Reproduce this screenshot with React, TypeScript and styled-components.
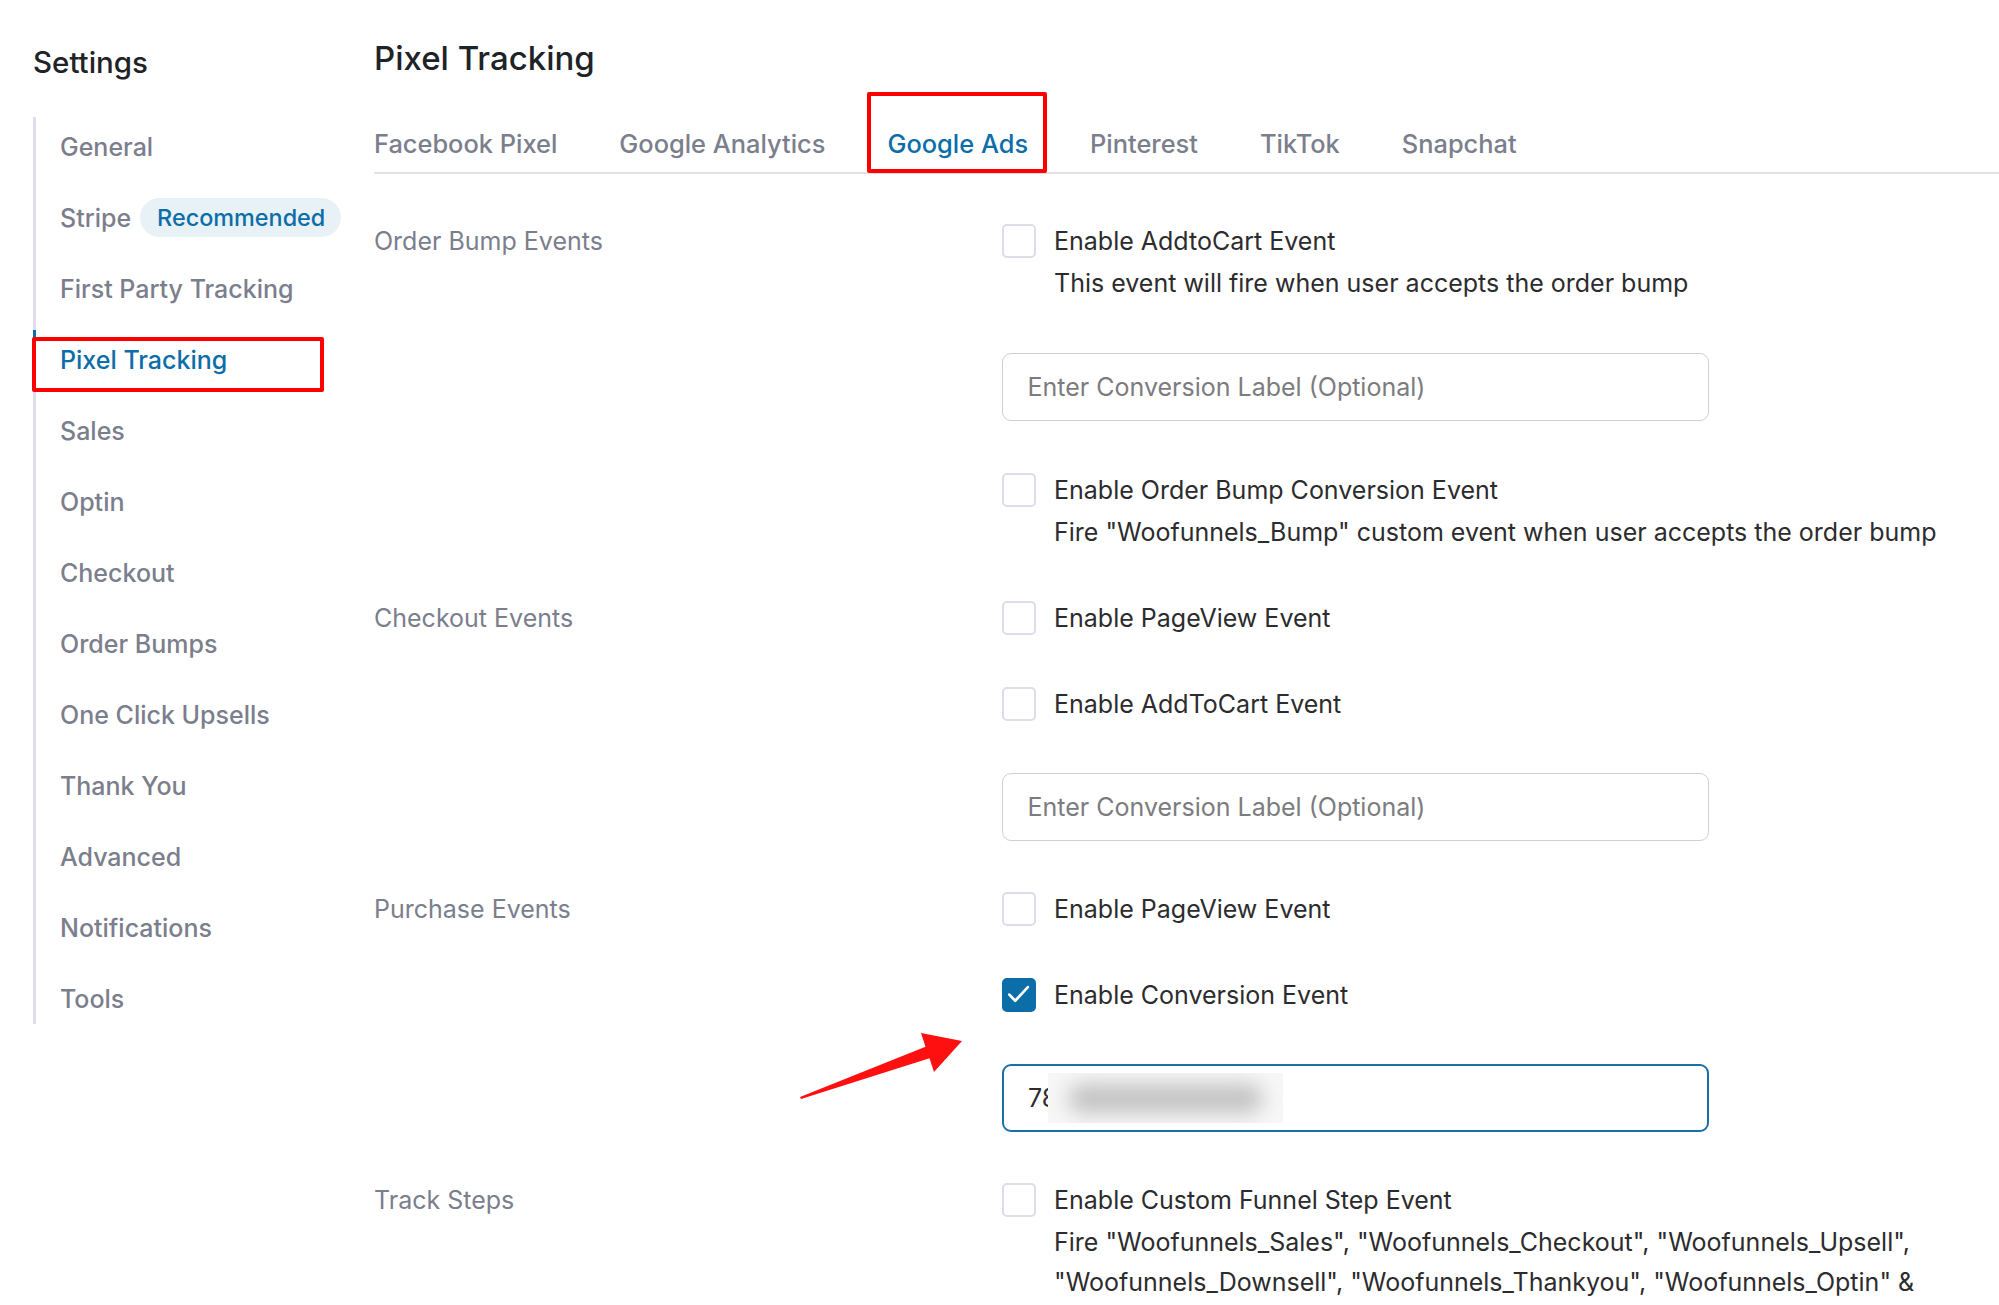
import React from "react";
import styled, { createGlobalStyle } from "styled-components";

const GlobalStyle = createGlobalStyle`
  html, body { margin: 0; padding: 0; background: #ffffff; }
  body {
    font-family: Inter, "Liberation Sans", Arial, sans-serif;
    -webkit-font-smoothing: antialiased;
  }
  *, *::before, *::after { box-sizing: border-box; }
`;

const BLUE = "#0b6ea8";
const GRAY = "#7b7e8c";
const DARK = "#2c2c2e";

const Page = styled.div`
  position: relative;
  display: flex;
  min-height: 1305px;
  padding-left: 33px;
  overflow: hidden;
`;

const Sidebar = styled.aside`
  width: 341px;
  flex-shrink: 0;
  display: flex;
  flex-direction: column;
`;

const SidebarTitle = styled.h2`
  margin: 45px 0 0 0;
  font-size: 29.5px;
  line-height: 34px;
  font-weight: 500;
  color: #1f2328;
`;

const Nav = styled.nav`
  position: relative;
  margin-top: 32px;
  display: flex;
  flex-direction: column;
  &::before {
    content: "";
    position: absolute;
    left: 0;
    top: 6px;
    bottom: 10px;
    width: 3px;
    background: #dedde9;
  }
`;

const NavItem = styled.div<{ $active?: boolean }>`
  position: relative;
  height: 71px;
  display: flex;
  align-items: center;
  gap: 9px;
  padding-left: 27px;
  font-size: 25px;
  line-height: 30px;
  font-weight: 500;
  color: ${(p) => (p.$active ? BLUE : GRAY)};
  ${(p) =>
    p.$active &&
    `
    &::before {
      content: "";
      position: absolute;
      left: 0;
      top: 6px;
      bottom: 6px;
      width: 3px;
      background: ${BLUE};
    }
    &::after {
      content: "";
      position: absolute;
      left: -1px;
      top: 13px;
      width: 292px;
      height: 55px;
      border: 4px solid #ff0000;
      border-radius: 2px;
    }
  `}
`;

const Pill = styled.span`
  display: inline-flex;
  align-items: center;
  height: 39px;
  padding: 0 16px 0 17px;
  border-radius: 20px;
  background: #e8f1f6;
  color: ${BLUE};
  font-size: 23.4px;
  font-weight: 500;
`;

const Main = styled.main`
  flex: 1;
  min-width: 0;
  display: flex;
  flex-direction: column;
`;

const PageTitle = styled.h1`
  margin: 39px 0 0 0;
  font-size: 33px;
  line-height: 39px;
  font-weight: 500;
  color: #1d2327;
`;

const TabBar = styled.div`
  margin-top: 14px;
  display: flex;
  gap: 62px;
  height: 82px;
  border-bottom: 2px solid #e2e1ec;
`;

const Tab = styled.div<{ $active?: boolean }>`
  position: relative;
  height: 80px;
  display: flex;
  align-items: flex-end;
  padding-bottom: 13px;
  font-size: 25.4px;
  line-height: 30px;
  font-weight: 500;
  white-space: nowrap;
  color: ${(p) => (p.$active ? BLUE : GRAY)};
  ${(p) =>
    p.$active &&
    `
    &::after {
      content: "";
      position: absolute;
      left: -20px;
      right: -19px;
      top: 0;
      bottom: -1px;
      border: 4px solid #ff0000;
      border-radius: 2px;
    }
  `}
`;

const Content = styled.div`
  margin-top: 50px;
  display: flex;
  flex-direction: column;
  gap: 51px;
`;

const Section = styled.section`
  display: grid;
  grid-template-columns: 628px 1fr;
`;

const SectionLabel = styled.div`
  height: 34px;
  display: flex;
  align-items: center;
  font-size: 25px;
  line-height: 30px;
  color: ${GRAY};
`;

const Fields = styled.div`
  display: flex;
  flex-direction: column;
  gap: 52px;
`;

const Field = styled.div`
  display: flex;
  flex-direction: column;
`;

const CheckRow = styled.label`
  display: flex;
  align-items: center;
  gap: 18px;
  height: 34px;
  font-size: 25px;
  line-height: 30px;
  color: ${DARK};
  white-space: nowrap;
`;

const Box = styled.span<{ $checked?: boolean }>`
  width: 34px;
  height: 34px;
  flex-shrink: 0;
  display: inline-flex;
  align-items: center;
  justify-content: center;
  border-radius: 5px;
  border: 2px solid ${(p) => (p.$checked ? BLUE : "#dddcea")};
  background: ${(p) => (p.$checked ? BLUE : "#ffffff")};
`;

const Desc = styled.p`
  margin: 5px 0 -2px 52px;
  font-size: 25px;
  line-height: 40px;
  color: ${DARK};
  white-space: nowrap;
`;

const InputWrap = styled.div`
  position: relative;
  width: 707px;
  height: 68px;
`;

const TextInput = styled.input<{ $focused?: boolean }>`
  width: 100%;
  height: 100%;
  border-radius: 9px;
  border: ${(p) => (p.$focused ? `2px solid #1c6ea6` : `1.5px solid #cfd0d6`)};
  padding: 0 0 0 ${(p) => (p.$focused ? "24px" : "24.5px")};
  font-family: inherit;
  font-size: 25px;
  color: ${DARK};
  background: #fff;
  outline: none;
  &::placeholder {
    color: #7c7c80;
  }
`;

const Redaction = styled.div`
  position: absolute;
  left: 46px;
  top: 9px;
  width: 235px;
  height: 50px;
  background: #f7f7f7;
  overflow: hidden;
`;

const RedactionBlob = styled.div`
  position: absolute;
  left: 20px;
  right: 20px;
  top: 11px;
  bottom: 10px;
  border-radius: 16px;
  background: #c2c2c2;
  filter: blur(10px);
`;

const ArrowSvg = styled.svg`
  position: absolute;
  left: 795px;
  top: 1028px;
  pointer-events: none;
`;

const Checkbox = ({ checked }: { checked?: boolean }) => (
  <Box $checked={checked}>
    {checked && (
      <svg width="30" height="30" viewBox="0 0 34 34" fill="none">
        <polyline
          points="6,16.5 12.7,23.5 27,8"
          stroke="#ffffff"
          strokeWidth="3"
          strokeLinecap="round"
          strokeLinejoin="round"
        />
      </svg>
    )}
  </Box>
);

const navItems = [
  "General",
  "Stripe",
  "First Party Tracking",
  "Pixel Tracking",
  "Sales",
  "Optin",
  "Checkout",
  "Order Bumps",
  "One Click Upsells",
  "Thank You",
  "Advanced",
  "Notifications",
  "Tools",
];

const tabs = ["Facebook Pixel", "Google Analytics", "Google Ads", "Pinterest", "TikTok", "Snapchat"];

export default function App() {
  return (
    <>
      <GlobalStyle />
      <Page>
        <Sidebar>
          <SidebarTitle>Settings</SidebarTitle>
          <Nav>
            {navItems.map((item) => (
              <NavItem key={item} $active={item === "Pixel Tracking"}>
                {item}
                {item === "Stripe" && <Pill>Recommended</Pill>}
              </NavItem>
            ))}
          </Nav>
        </Sidebar>

        <Main>
          <PageTitle>Pixel Tracking</PageTitle>
          <TabBar>
            {tabs.map((t) => (
              <Tab key={t} $active={t === "Google Ads"}>
                {t}
              </Tab>
            ))}
          </TabBar>

          <Content>
            <Section>
              <SectionLabel>Order Bump Events</SectionLabel>
              <Fields>
                <Field>
                  <CheckRow>
                    <Checkbox />
                    Enable AddtoCart Event
                  </CheckRow>
                  <Desc>This event will fire when user accepts the order bump</Desc>
                </Field>
                <InputWrap>
                  <TextInput placeholder="Enter Conversion Label (Optional)" />
                </InputWrap>
                <Field>
                  <CheckRow>
                    <Checkbox />
                    Enable Order Bump Conversion Event
                  </CheckRow>
                  <Desc>Fire "Woofunnels_Bump" custom event when user accepts the order bump</Desc>
                </Field>
              </Fields>
            </Section>

            <Section>
              <SectionLabel>Checkout Events</SectionLabel>
              <Fields>
                <CheckRow>
                  <Checkbox />
                  Enable PageView Event
                </CheckRow>
                <CheckRow>
                  <Checkbox />
                  Enable AddToCart Event
                </CheckRow>
                <InputWrap>
                  <TextInput placeholder="Enter Conversion Label (Optional)" />
                </InputWrap>
              </Fields>
            </Section>

            <Section>
              <SectionLabel>Purchase Events</SectionLabel>
              <Fields>
                <CheckRow>
                  <Checkbox />
                  Enable PageView Event
                </CheckRow>
                <CheckRow>
                  <Checkbox checked />
                  Enable Conversion Event
                </CheckRow>
                <InputWrap>
                  <TextInput $focused defaultValue="78" />
                  <Redaction>
                    <RedactionBlob />
                  </Redaction>
                </InputWrap>
              </Fields>
            </Section>

            <Section>
              <SectionLabel>Track Steps</SectionLabel>
              <Fields>
                <Field>
                  <CheckRow>
                    <Checkbox />
                    Enable Custom Funnel Step Event
                  </CheckRow>
                  <Desc>
                    Fire "Woofunnels_Sales", "Woofunnels_Checkout", "Woofunnels_Upsell",
                    <br />
                    "Woofunnels_Downsell", "Woofunnels_Thankyou", "Woofunnels_Optin" &amp;
                  </Desc>
                </Field>
              </Fields>
            </Section>
          </Content>
        </Main>

        <ArrowSvg width="175" height="75" viewBox="0 0 175 75">
          <polygon
            points="5,69 6,71 134.5,30.2 139,44 167,13 126,5 130.5,18.8"
            fill="#ff1010"
          />
        </ArrowSvg>
      </Page>
    </>
  );
}
